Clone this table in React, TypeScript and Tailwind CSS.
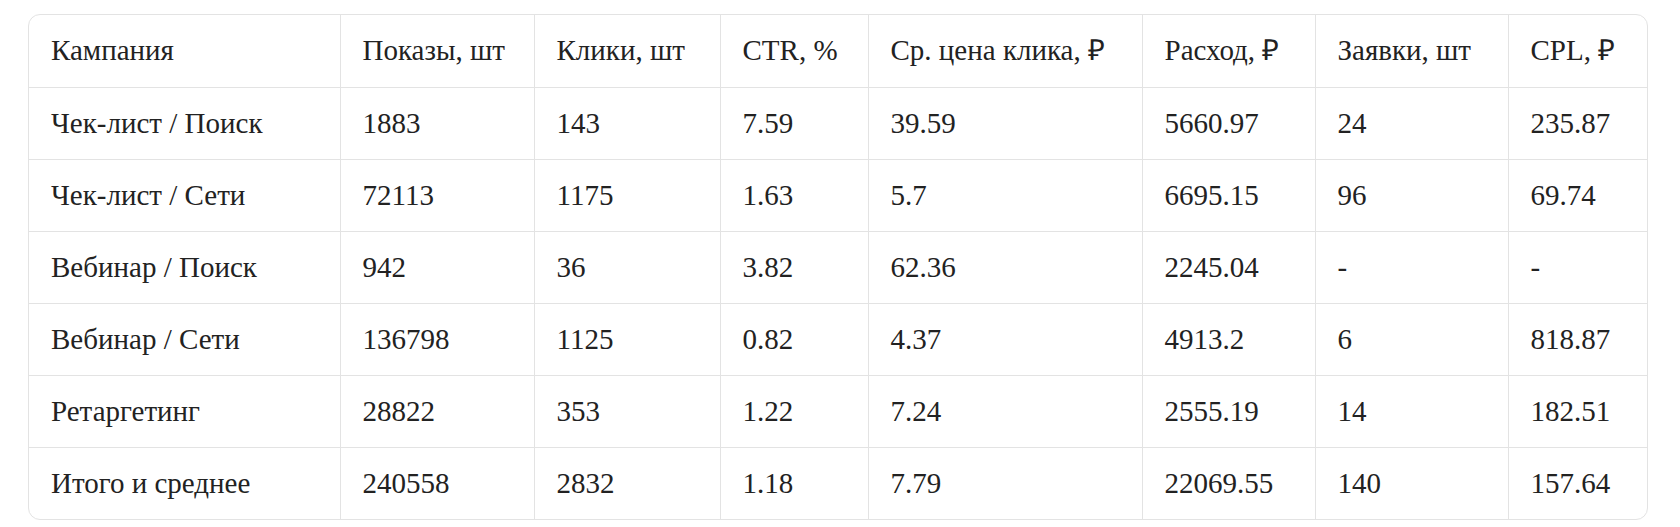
const HEADERS = [
  'Кампания',
  'Показы, шт',
  'Клики, шт',
  'CTR, %',
  'Ср. цена клика, ₽',
  'Расход, ₽',
  'Заявки, шт',
  'CPL, ₽',
];

const ROWS = [
  ['Чек-лист / Поиск', '1883', '143', '7.59', '39.59', '5660.97', '24', '235.87'],
  ['Чек-лист / Сети', '72113', '1175', '1.63', '5.7', '6695.15', '96', '69.74'],
  ['Вебинар / Поиск', '942', '36', '3.82', '62.36', '2245.04', '-', '-'],
  ['Вебинар / Сети', '136798', '1125', '0.82', '4.37', '4913.2', '6', '818.87'],
  ['Ретаргетинг', '28822', '353', '1.22', '7.24', '2555.19', '14', '182.51'],
  ['Итого и среднее', '240558', '2832', '1.18', '7.79', '22069.55', '140', '157.64'],
];

const WIDTHS = ['w-[311px]', 'w-[194px]', 'w-[186px]', 'w-[148px]', 'w-[274px]', 'w-[173px]', 'w-[193px]', 'w-[141px]'];

export default function App() {
  return (
    <div className="min-h-[527px] bg-white pl-[28px] pt-[14px] font-['Liberation_Serif',serif] text-[#222222]">
      <div className="w-[1620px] overflow-hidden rounded-[12px] border border-[#e3e3e3]">
        <table className="w-full table-fixed border-collapse text-[29px] leading-none">
          <colgroup>
            {WIDTHS.map((w, i) => (
              <col key={i} className={w} />
            ))}
          </colgroup>
          <thead>
            <tr className="h-[72px] border-b border-[#e3e3e3]">
              {HEADERS.map((h, i) => (
                <th
                  key={h}
                  className={`px-[22px] text-left font-normal ${i < HEADERS.length - 1 ? 'border-r border-[#e3e3e3]' : ''}`}
                >
                  {h}
                </th>
              ))}
            </tr>
          </thead>
          <tbody>
            {ROWS.map((row, r) => (
              <tr
                key={row[0]}
                className={`h-[72px] ${r < ROWS.length - 1 ? 'border-b border-[#e3e3e3]' : ''}`}
              >
                {row.map((cell, i) => (
                  <td
                    key={i}
                    className={`px-[22px] ${i < row.length - 1 ? 'border-r border-[#e3e3e3]' : ''}`}
                  >
                    {cell}
                  </td>
                ))}
              </tr>
            ))}
          </tbody>
        </table>
      </div>
    </div>
  );
}
